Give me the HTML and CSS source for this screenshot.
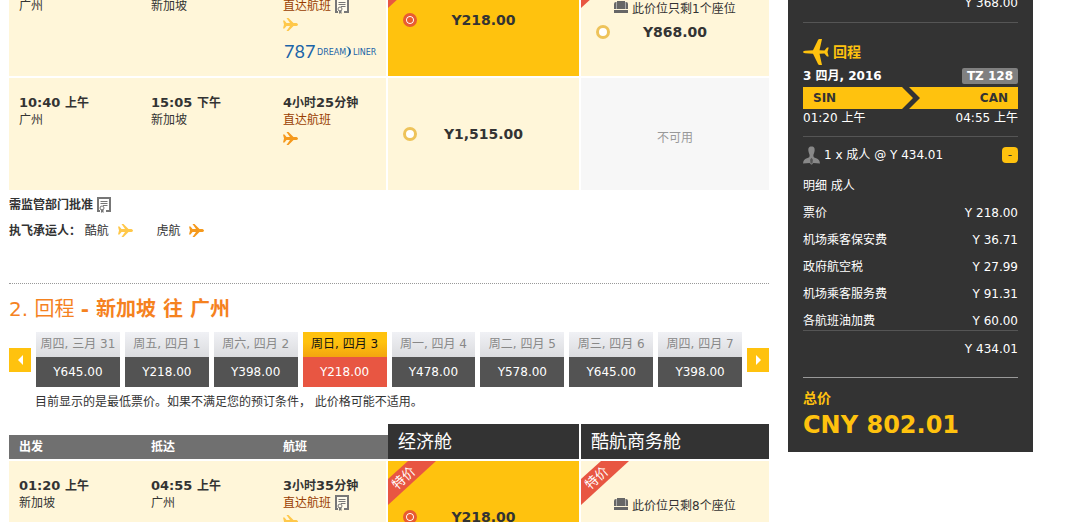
FILE: index.html
```html
<!DOCTYPE html>
<html lang="zh-CN">
<head>
  <meta charset="UTF-8">
  <title>选择航班</title>
  <link rel="stylesheet" href="styles.css">
</head>
<body>

  <svg class="sprite" aria-hidden="true">
    <symbol id="plane" viewBox="0 0 30 26">
      <path d="M0 5h3l4 5h7L7 0h4l10 10h6q3 1 3 3t-3 3h-6L11 26H7l7-10H7l-4 5H0l2-8z"/>
    </symbol>
    <symbol id="plane-side" viewBox="0 0 26 26">
      <path d="M0 13q0-1 2-1.200L10 11.200 15 1q.5-1 1.500-1H19L16.500 11.200l5 .3L24 8.500h1.700L24.500 13l1.200 4.500H24l-2.500-3-5 .3L19 26h-2.500q-1 0-1.500-1l-5-10.200-8-.6Q0 14 0 13z"/>
    </symbol>
    <symbol id="permit" viewBox="0 0 14 16">
      <path d="M3 14H1V1h12v13H9" fill="#fff" fill-opacity=".5" stroke="#777" stroke-width="2"/>
      <path d="M3.500 4.500h7M3.500 6.500h7M6 8.500h4.500" stroke="#777"/>
      <circle cx="5" cy="11" r="2" fill="none" stroke="#777"/>
      <path d="M4 12.500V16l1.200-1 1.300 1v-3.500" fill="#777"/>
    </symbol>
    <symbol id="seat" viewBox="0 0 14 12">
      <path d="M3 0h8v8H3zM0 3q0-2 2-2v7H0zM14 3q0-2-2-2v7h2zM0 9h14v3H0z" fill="#666"/>
      <path d="M2 1h1v7H2zM11 1h1v7h-1z" fill="#aaa"/>
    </symbol>
    <symbol id="person" viewBox="0 0 18 19">
      <path d="M9 0c3 0 3.500 2 3.300 4.500C12 7 11 8 11 9.500c0 2 .5 2 3 3s3.500 2 4 5.500L11 17.500 9.500 19h-1L7 17.500 0 18c.5-3.500 1.500-4.500 4-5.500s3-1 3-3C7 8 6 7 5.700 4.500 5.500 2 6 0 9 0z" fill="#888"/>
      <path d="M9 12l1.500 2L10 18H8l-.5-4z" fill="#555"/>
    </symbol>
    <symbol id="dreamliner" viewBox="0 0 96 16">
      <text x="1" y="14" class="logo-787">787</text>
      <text x="34" y="11" class="logo-name">DREAM</text>
      <path d="M62 2q6 1 6 6t-8 6q6-1 6-6t-4-6z" fill="#1b64a8"/>
      <text x="70" y="11" class="logo-name">LINER</text>
    </symbol>
    <symbol id="deal" viewBox="0 0 48 44">
      <path d="M0 18 20 0H48L0 44z" fill="#e85642"/>
      <text x="9" y="29" transform="rotate(-42 9 29)" class="deal-text">特价</text>
    </symbol>
  </svg>

  <div class="page">
    <main class="main">

      <table class="flights">
        <colgroup>
          <col class="col-time"><col class="col-time"><col class="col-flight"><col class="col-economy"><col>
        </colgroup>
        <tbody>
          <tr>
            <td><b>01:20 <small>上午</small></b><br>广州</td>
            <td><b>05:30 <small>上午</small></b><br>新加坡</td>
            <td class="flight">
              <b>4<small>小时</small>10<small>分钟</small></b><br>
              <a href="#">直达航班</a> <svg class="permit"><use href="#permit"/></svg>
              <svg class="carrier scoot"><use href="#plane"/></svg>
              <svg class="dreamliner"><use href="#dreamliner"/></svg>
            </td>
            <td class="fare selected">
              <svg class="deal"><use href="#deal"/></svg>
              <label class="price"><input type="radio" name="outbound" checked><span>Y218.00</span></label>
            </td>
            <td class="fare">
              <svg class="deal"><use href="#deal"/></svg>
              <p class="seats"><svg class="seat"><use href="#seat"/></svg> 此价位只剩1个座位</p>
              <label class="price"><input type="radio" name="outbound"><span>Y868.00</span></label>
            </td>
          </tr>
          <tr>
            <td><b>10:40 <small>上午</small></b><br>广州</td>
            <td><b>15:05 <small>下午</small></b><br>新加坡</td>
            <td class="flight">
              <b>4<small>小时</small>25<small>分钟</small></b><br>
              <a href="#">直达航班</a>
              <svg class="carrier tiger"><use href="#plane"/></svg>
            </td>
            <td class="fare">
              <label class="price"><input type="radio" name="outbound"><span>Y1,515.00</span></label>
            </td>
            <td class="fare sold-out">不可用</td>
          </tr>
        </tbody>
      </table>

      <div class="legend">
        <p><b>需监管部门批准</b> <svg class="permit"><use href="#permit"/></svg></p>
        <p class="carriers">
          <b>执飞承运人：</b>
          <span>酷航 <svg class="plane scoot"><use href="#plane"/></svg></span>
          <span>虎航 <svg class="plane tiger"><use href="#plane"/></svg></span>
        </p>
      </div>

      <h2>2. 回程 <b>- 新加坡 往 广州</b></h2>

      <div class="dates">
        <button class="arrow" aria-label="前一天"><svg viewBox="0 0 5 10"><path d="M5 0v10L0 5z"/></svg></button>
        <button class="date"><span>周四, 三月 31</span><span>Y645.00</span></button>
        <button class="date"><span>周五, 四月 1</span><span>Y218.00</span></button>
        <button class="date"><span>周六, 四月 2</span><span>Y398.00</span></button>
        <button class="date current"><span>周日, 四月 3</span><span>Y218.00</span></button>
        <button class="date"><span>周一, 四月 4</span><span>Y478.00</span></button>
        <button class="date"><span>周二, 四月 5</span><span>Y578.00</span></button>
        <button class="date"><span>周三, 四月 6</span><span>Y645.00</span></button>
        <button class="date"><span>周四, 四月 7</span><span>Y398.00</span></button>
        <button class="arrow" aria-label="后一天"><svg viewBox="0 0 5 10"><path d="M0 0v10l5-5z"/></svg></button>
      </div>
      <p class="note">目前显示的是最低票价。如果不满足您的预订条件， 此价格可能不适用。</p>

      <table class="flights">
        <colgroup>
          <col class="col-time"><col class="col-time"><col class="col-flight"><col class="col-economy"><col>
        </colgroup>
        <thead>
          <tr>
            <th><span>出发</span></th>
            <th><span>抵达</span></th>
            <th><span>航班</span></th>
            <th class="cabin">经济舱</th>
            <th class="cabin">酷航商务舱</th>
          </tr>
        </thead>
        <tbody>
          <tr>
            <td><b>01:20 <small>上午</small></b><br>新加坡</td>
            <td><b>04:55 <small>上午</small></b><br>广州</td>
            <td class="flight">
              <b>3<small>小时</small>35<small>分钟</small></b><br>
              <a href="#">直达航班</a> <svg class="permit"><use href="#permit"/></svg>
              <svg class="carrier scoot"><use href="#plane"/></svg>
            </td>
            <td class="fare selected">
              <svg class="deal"><use href="#deal"/></svg>
              <label class="price"><input type="radio" name="return" checked><span>Y218.00</span></label>
            </td>
            <td class="fare">
              <svg class="deal"><use href="#deal"/></svg>
              <p class="seats"><svg class="seat"><use href="#seat"/></svg> 此价位只剩8个座位</p>
              <label class="price"><input type="radio" name="return"><span>Y868.00</span></label>
            </td>
          </tr>
        </tbody>
      </table>
    </main>

    <aside class="summary">
      <p class="subtotal">Y 368.00</p>

      <section class="leg">
        <h3><svg class="leg-plane"><use href="#plane-side"/></svg> 回程</h3>
        <div class="line day"><b>3 四月, 2016</b><b class="flight-no">TZ 128</b></div>
        <div class="line route">
          <span>SIN</span>
          <svg viewBox="0 0 18 22"><path d="M0 0h7l11 11-11 11H0l11-11z"/></svg>
          <span>CAN</span>
        </div>
        <div class="line times"><span>01:20 上午</span><span>04:55 上午</span></div>
      </section>

      <section class="passengers">
        <div class="line pax">
          <span class="pax-type"><svg class="person"><use href="#person"/></svg> 1 x 成人 @ Y 434.01</span>
          <button class="collapse">-</button>
        </div>
        <table class="fees">
          <tr><th colspan="2">明细 成人</th></tr>
          <tr><th>票价</th><td>Y 218.00</td></tr>
          <tr><th>机场乘客保安费</th><td>Y 36.71</td></tr>
          <tr><th>政府航空税</th><td>Y 27.99</td></tr>
          <tr><th>机场乘客服务费</th><td>Y 91.31</td></tr>
          <tr><th>各航班油加费</th><td>Y 60.00</td></tr>
        </table>
        <p class="fees-total">Y 434.01</p>
      </section>

      <div class="total">
        <h3>总价</h3>
        <strong>CNY 802.01</strong>
      </div>
    </aside>
  </div>

</body>
</html>
```
FILE: styles.css
```css
* {
  box-sizing: border-box;
}
body {
  margin: 0;
  height: 100vh;
  overflow: hidden;
  font-family: Verdana, "DejaVu Sans", "Noto Sans CJK SC", sans-serif;
  font-size: 12px;
  line-height: 17px;
  color: #333;
  background: #fff;
}
p, h2, h3 {
  margin: 0;
}
button {
  font: inherit;
  border: 0;
  padding: 0;
  cursor: pointer;
}
.sprite {
  display: none;
}
/* page is scrolled part of the way into the first flight */
.page {
  display: flex;
  align-items: flex-start;
  gap: 19px;
  margin-top: -36px;
  padding: 0 35px 0 9px;
}
.main {
  flex: 1;
  min-width: 0;
}

/* flight tables */
.flights {
  width: 100%;
  table-layout: fixed;
  border-spacing: 0;
}
.col-time {
  width: 132px;
}
.col-flight {
  width: 115px;
}
.col-economy {
  width: 193px;
}
.flights td {
  position: relative;
  height: 114px;
  padding: 16px 0 0 10px;
  vertical-align: top;
  background: #fff6d9;
  border-bottom: 2px solid #fff;
}
.flights td b {
  font-size: 13px;
}
.flights small {
  font-size: 12px;
}
.flights .flight {
  border-right: 2px solid #fff;
  white-space: nowrap;
}
.flight a {
  color: #993d00;
  text-decoration: none;
}
.permit {
  width: 14px;
  height: 16px;
  vertical-align: -4px;
}
.carrier {
  display: block;
  width: 15px;
  height: 13px;
  margin-top: 3px;
}
.plane {
  width: 15px;
  height: 13px;
  margin-left: 5px;
  vertical-align: -2px;
}
.scoot {
  fill: #ffc84a;
}
.tiger {
  fill: #f5991c;
}
.dreamliner {
  display: block;
  width: 96px;
  height: 16px;
  margin-top: 13px;
}
.logo-787 {
  font: 18px Lato, sans-serif;
  fill: #1b64a8;
}
.logo-name {
  font: 8px "DejaVu Sans", sans-serif;
  fill: #1b64a8;
}
.flights .fare {
  padding: 0 15px;
  vertical-align: middle;
  text-align: center;
}
.flights .fare:nth-child(4) {
  border-right: 2px solid #fff;
}
.flights .selected {
  background: #ffc20e;
}
.flights .sold-out {
  padding-top: 8px;
  background: #f7f7f7;
  color: #999;
}
.price {
  display: grid;
  grid-template-columns: 16px 1fr 16px;
  align-items: center;
  font-size: 14px;
  font-weight: bold;
  line-height: 24px;
}
.price input {
  appearance: none;
  width: 14px;
  height: 14px;
  margin: 0;
  border: 3px solid #eec35a;
  border-radius: 50%;
  background: #fff;
}
.price input:checked {
  border-color: #e85b32;
  background: #e85b32;
  box-shadow: inset 0 0 0 1px #fff;
}
.seats {
  padding-top: 2px;
  line-height: 22px;
}
.seat {
  width: 14px;
  height: 12px;
}
.deal {
  position: absolute;
  top: 0;
  left: 0;
  width: 48px;
  height: 44px;
}
.deal-text {
  font: 13px "Noto Sans CJK SC", sans-serif;
  fill: #fff;
}
.flights th {
  height: 37px;
  padding: 0;
  vertical-align: bottom;
  text-align: left;
  color: #fff;
  border-bottom: 2px solid #fff;
}
.flights th span {
  display: block;
  padding-left: 10px;
  line-height: 24px;
  background: #707070;
}
.flights .cabin {
  padding-left: 10px;
  vertical-align: middle;
  font-size: 18px;
  font-weight: normal;
  background: #333;
}
.flights .cabin:nth-child(4) {
  border-right: 2px solid #fff;
}

/* legend */
.legend {
  padding-bottom: 39px;
  line-height: 26px;
  border-bottom: 1px dotted #999;
}
.carriers span {
  margin-right: 20px;
}
h2 {
  padding: 11px 0 8px;
  font-size: 20px;
  font-weight: normal;
  line-height: 29px;
  color: #f5821f;
}

/* date strip */
.dates {
  display: flex;
  align-items: center;
  gap: 5px;
}
.date {
  flex: 1;
  color: #fff;
  background: #535353;
}
.date span {
  display: block;
  line-height: 30px;
  white-space: nowrap;
}
.date span:first-child {
  line-height: 25px;
  color: #888;
  background: linear-gradient(#f0f1f5, #dbdcdf);
}
.current {
  background: #e85642;
}
.date.current span:first-child {
  color: #111;
  background: linear-gradient(#ffc20e 40%, #f3a50f);
}
.arrow {
  width: 22px;
  height: 24px;
  background: #ffc20e;
}
.arrow svg {
  display: block;
  width: 5px;
  height: 10px;
  margin: 0 auto;
  fill: #fff;
}
.note {
  padding: 7px 0 13px 26px;
}

/* booking summary */
.summary {
  width: 245px;
  padding: 31px 15px 12px;
  color: #fff;
  background: #333;
}
.subtotal {
  padding-bottom: 10px;
  text-align: right;
}
.line {
  display: flex;
  justify-content: space-between;
  align-items: center;
}
.leg {
  padding: 16px 0 9px;
  border-top: 1px solid #555;
  border-bottom: 1px solid #555;
}
.summary h3 {
  display: flex;
  gap: 4px;
  font-size: 14px;
  line-height: 26px;
  color: #ffc20e;
}
.leg-plane {
  width: 26px;
  height: 26px;
  fill: #ffc20e;
}
.day {
  height: 22px;
}
.flight-no {
  padding: 0 5px;
  line-height: 16px;
  border-radius: 2px;
  background: #808080;
}
.route {
  height: 22px;
  padding: 0 10px;
  font-weight: bold;
  color: #333;
  background: #ffc20e;
}
.route span {
  flex: 1;
}
.route span:last-child {
  text-align: right;
}
.route svg {
  width: 18px;
  height: 22px;
  fill: #333;
}
.times {
  height: 18px;
}
.pax {
  height: 36px;
}
.pax-type {
  display: flex;
  align-items: center;
  gap: 4px;
}
.person {
  width: 17px;
  height: 19px;
}
.collapse {
  width: 16px;
  height: 16px;
  line-height: 14px;
  border-radius: 4px;
  color: #333;
  background: #ffc20e;
}
.fees {
  width: 100%;
  border-spacing: 0;
  border-bottom: 1px solid #555;
}
.fees th {
  padding: 5px 0;
  font-weight: normal;
  text-align: left;
}
.fees td {
  padding: 5px 0;
  text-align: right;
}
.fees tr:last-child > * {
  padding-bottom: 0;
}
.fees-total {
  padding: 10px 0 19px;
  text-align: right;
  border-bottom: 1px solid #999;
}
.total {
  padding-top: 7px;
}
.total strong {
  font-size: 24px;
  line-height: 29px;
  color: #ffc20e;
}
```
